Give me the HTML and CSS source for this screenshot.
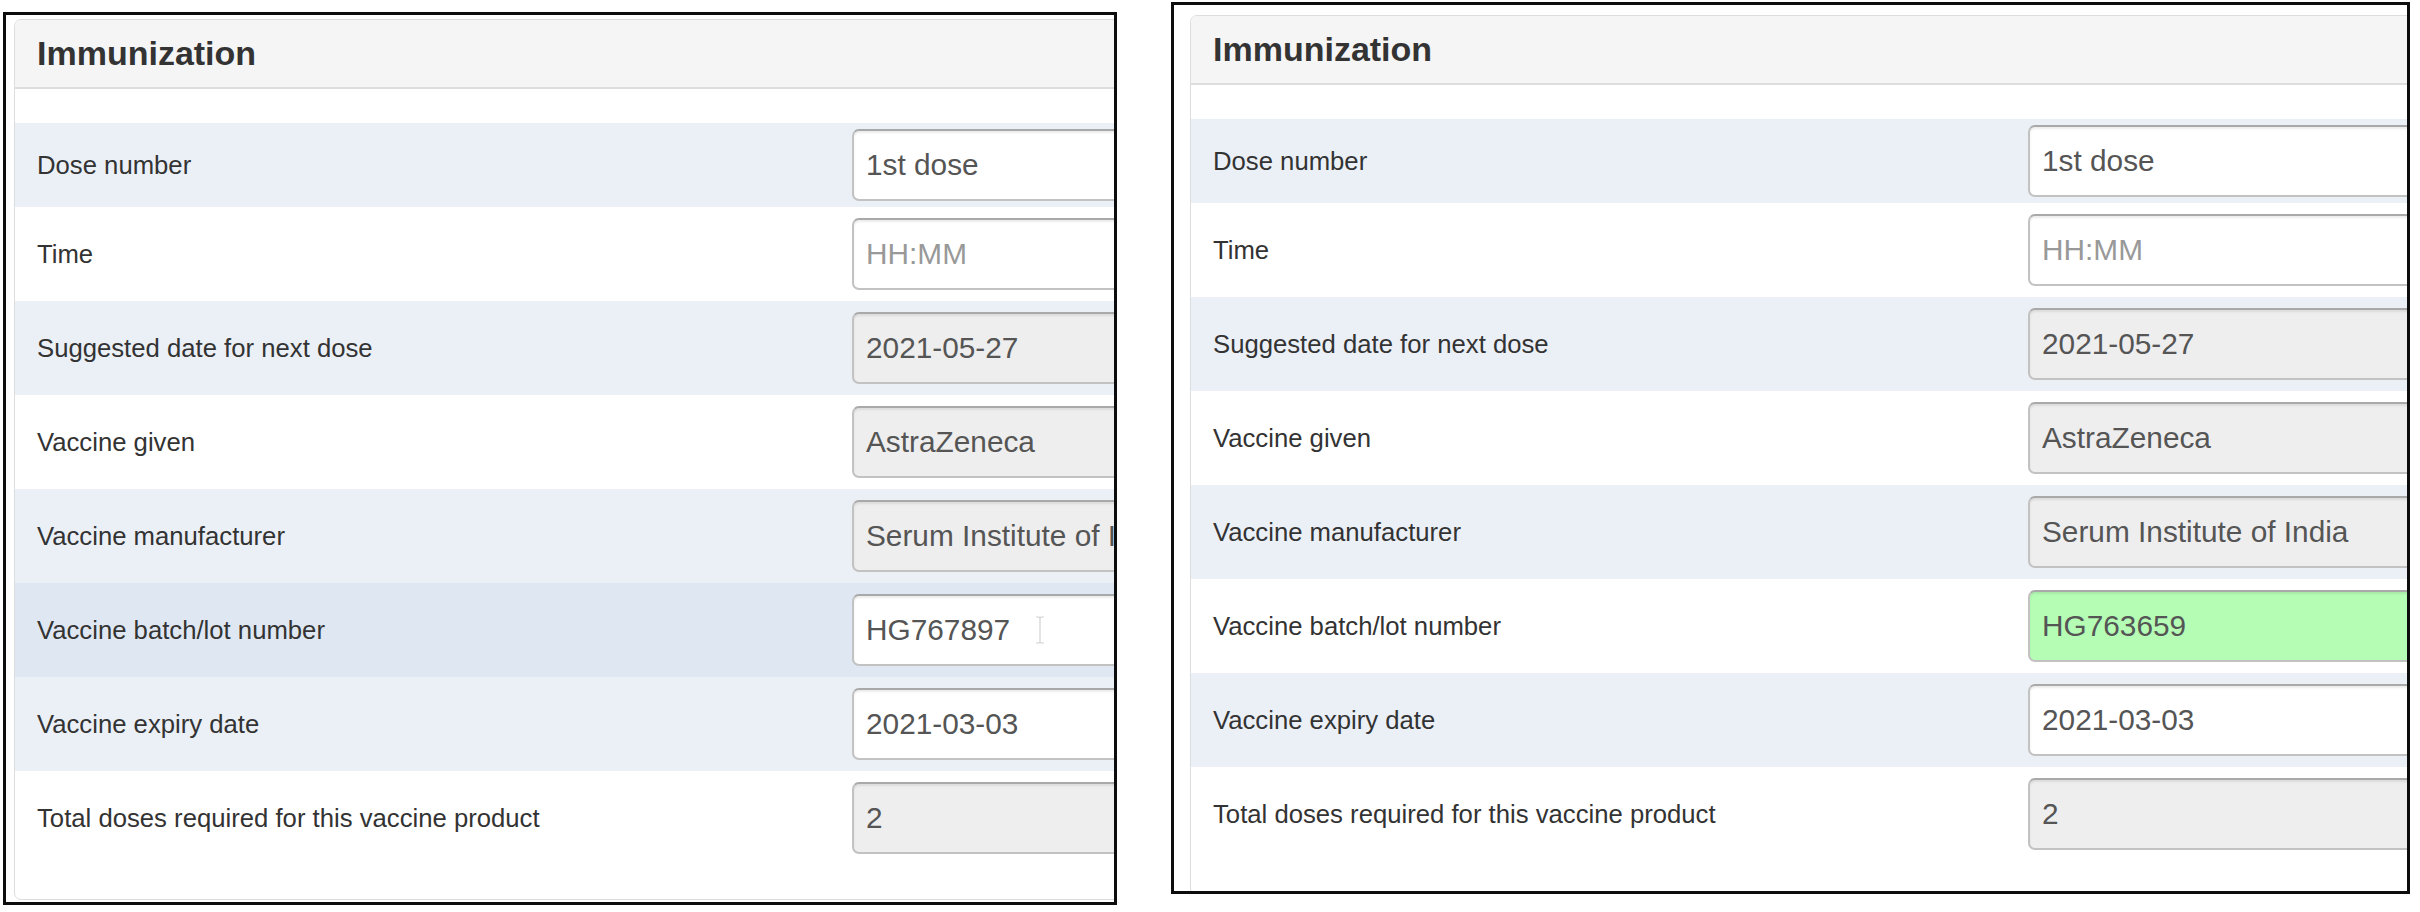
FILE: index.html
```html
<!DOCTYPE html>
<html lang="en">
<head>
<meta charset="utf-8">
<title>Immunization</title>
<link rel="stylesheet" href="styles.css">
</head>
<body>
<div class="shot shot-left">
  <div class="panel">
    <div class="panel-heading">Immunization</div>
    <div class="panel-body">
      <div class="row row-first odd"><div class="label">Dose number</div><div class="field"><input class="ctl" type="text" value="1st dose" readonly></div></div>
      <div class="row"><div class="label">Time</div><div class="field"><input class="ctl" type="text" placeholder="HH:MM" readonly></div></div>
      <div class="row odd"><div class="label">Suggested date for next dose</div><div class="field"><input class="ctl ctl-disabled" type="text" value="2021-05-27" readonly></div></div>
      <div class="row"><div class="label">Vaccine given</div><div class="field"><input class="ctl ctl-disabled" type="text" value="AstraZeneca" readonly></div></div>
      <div class="row odd"><div class="label">Vaccine manufacturer</div><div class="field"><input class="ctl ctl-disabled" type="text" value="Serum Institute of India" readonly></div></div>
      <div class="row hover"><div class="label">Vaccine batch/lot number</div><div class="field"><input class="ctl" type="text" value="HG767897" readonly><svg class="ibeam" width="10" height="28" viewBox="0 0 10 28"><path d="M1 1h3l1 1 1-1h3M5 2v24M1 27h3l1-1 1 1h3" fill="none" stroke="#d2d2d2" stroke-width="1.2"/></svg></div></div>
      <div class="row odd"><div class="label">Vaccine expiry date</div><div class="field"><input class="ctl" type="text" value="2021-03-03" readonly></div></div>
      <div class="row"><div class="label">Total doses required for this vaccine product</div><div class="field"><input class="ctl ctl-disabled" type="text" value="2" readonly></div></div>
    </div>
  </div>
</div>
<div class="shot shot-right">
  <div class="panel">
    <div class="panel-heading">Immunization</div>
    <div class="panel-body">
      <div class="row row-first odd"><div class="label">Dose number</div><div class="field"><input class="ctl" type="text" value="1st dose" readonly></div></div>
      <div class="row"><div class="label">Time</div><div class="field"><input class="ctl" type="text" placeholder="HH:MM" readonly></div></div>
      <div class="row odd"><div class="label">Suggested date for next dose</div><div class="field"><input class="ctl ctl-disabled" type="text" value="2021-05-27" readonly></div></div>
      <div class="row"><div class="label">Vaccine given</div><div class="field"><input class="ctl ctl-disabled" type="text" value="AstraZeneca" readonly></div></div>
      <div class="row odd"><div class="label">Vaccine manufacturer</div><div class="field"><input class="ctl ctl-disabled" type="text" value="Serum Institute of India" readonly></div></div>
      <div class="row"><div class="label">Vaccine batch/lot number</div><div class="field"><input class="ctl ctl-valid" type="text" value="HG763659" readonly></div></div>
      <div class="row odd"><div class="label">Vaccine expiry date</div><div class="field"><input class="ctl" type="text" value="2021-03-03" readonly></div></div>
      <div class="row"><div class="label">Total doses required for this vaccine product</div><div class="field"><input class="ctl ctl-disabled" type="text" value="2" readonly></div></div>
    </div>
  </div>
</div>
</body>
</html>
```
FILE: styles.css
```css
html, body {
  margin: 0;
  padding: 0;
  background: #ffffff;
}
body {
  width: 2420px;
  height: 912px;
  display: flex;
  align-items: flex-start;
  font-family: "Liberation Sans", Arial, Helvetica, sans-serif;
  color: #333333;
  overflow: hidden;
}
.shot {
  box-sizing: border-box;
  border: 3px solid #0d0d0d;
  overflow: hidden;
  background: #ffffff;
  flex: none;
}
.shot-left {
  margin: 12px 0 0 3px;
  width: 1114px;
  height: 893px;
  padding: 4px 0 0 8px;
}
.shot-right {
  margin: 2px 0 0 54px;
  width: 1239px;
  height: 892px;
  padding: 10px 0 0 16px;
}
.panel {
  width: 1500px;
  border: 1px solid #dddddd;
  border-radius: 7px;
  background: #ffffff;
  overflow: hidden;
}
.panel-heading {
  height: 67px;
  background: #f5f5f5;
  border-bottom: 2px solid #dddddd;
  display: flex;
  align-items: center;
  padding-left: 22px;
  font-size: 34px;
  font-weight: bold;
  color: #333333;
}
.panel-body {
  padding: 34px 0 34px 0;
}
.row {
  display: grid;
  grid-template-columns: 837px 1fr;
  align-items: center;
  padding: 11px 0;
  background: #ffffff;
}
.row.row-first {
  padding: 6px 0;
}
.row.odd {
  background: #ebf0f7;
}
.row.hover {
  background: #dfe8f2;
}
.label {
  padding-left: 22px;
  font-size: 25.7px;
  color: #333333;
}
.field {
  position: relative;
  display: flex;
}
.ctl {
  box-sizing: border-box;
  width: 560px;
  height: 72px;
  margin: 0;
  padding: 0 12px;
  border: 2px solid #c2c2c2;
  border-top-color: #a9a9a9;
  border-radius: 7px;
  background: #ffffff;
  box-shadow: inset 0 2px 2px rgba(0, 0, 0, 0.08);
  font-family: "Liberation Sans", Arial, Helvetica, sans-serif;
  font-size: 29.8px;
  color: #555555;
  outline: none;
}
.ctl::placeholder {
  color: #999999;
}
.ctl-disabled {
  background: #eeeeee;
}
.ctl-valid {
  background: #b5fdb5;
}
.ibeam {
  position: absolute;
  left: 183px;
  top: 22px;
}
```
